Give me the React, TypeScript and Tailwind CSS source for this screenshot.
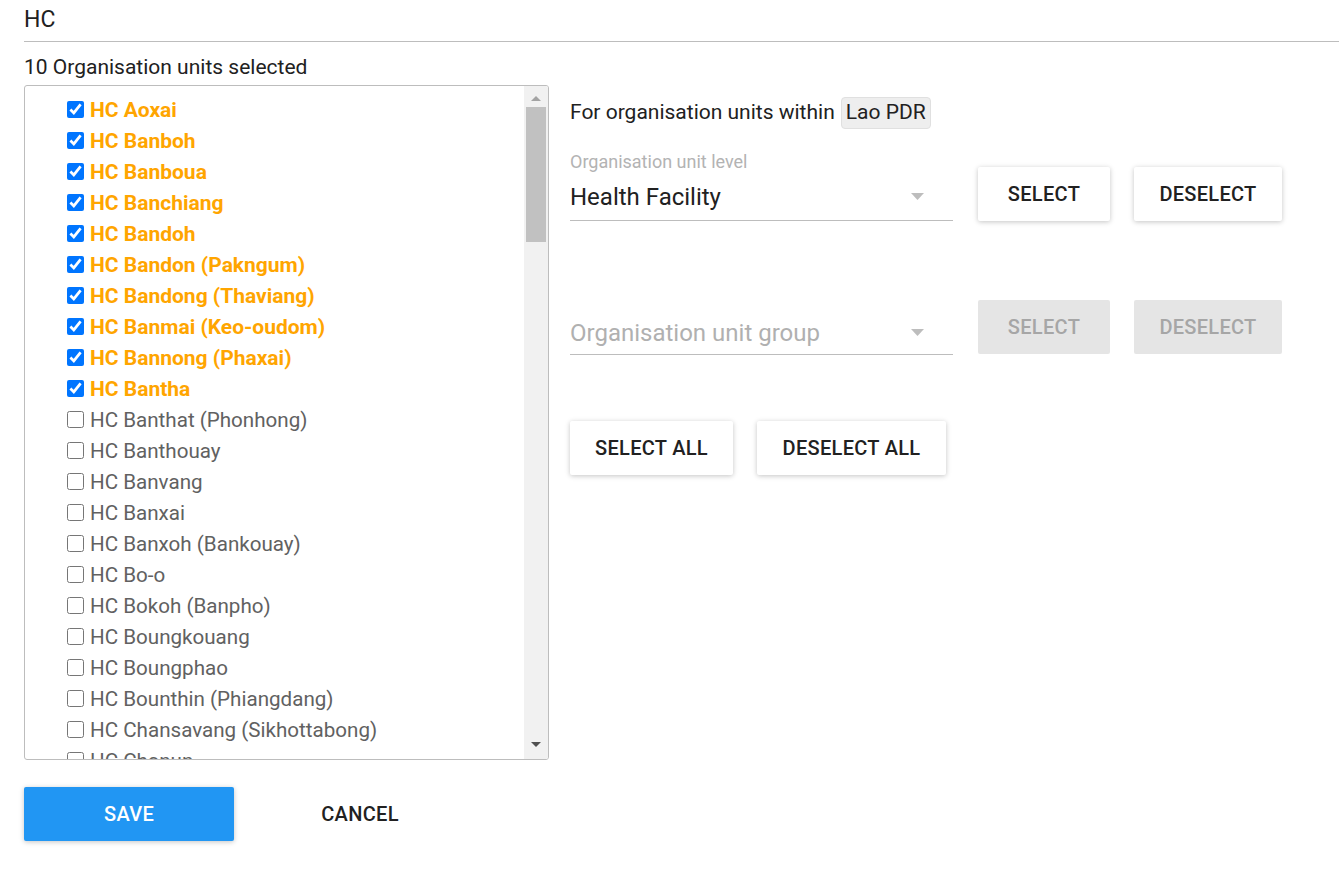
import React from 'react';

const units: { name: string; selected: boolean }[] = [
  { name: 'HC Aoxai', selected: true },
  { name: 'HC Banboh', selected: true },
  { name: 'HC Banboua', selected: true },
  { name: 'HC Banchiang', selected: true },
  { name: 'HC Bandoh', selected: true },
  { name: 'HC Bandon (Pakngum)', selected: true },
  { name: 'HC Bandong (Thaviang)', selected: true },
  { name: 'HC Banmai (Keo-oudom)', selected: true },
  { name: 'HC Bannong (Phaxai)', selected: true },
  { name: 'HC Bantha', selected: true },
  { name: 'HC Banthat (Phonhong)', selected: false },
  { name: 'HC Banthouay', selected: false },
  { name: 'HC Banvang', selected: false },
  { name: 'HC Banxai', selected: false },
  { name: 'HC Banxoh (Bankouay)', selected: false },
  { name: 'HC Bo-o', selected: false },
  { name: 'HC Bokoh (Banpho)', selected: false },
  { name: 'HC Boungkouang', selected: false },
  { name: 'HC Boungphao', selected: false },
  { name: 'HC Bounthin (Phiangdang)', selected: false },
  { name: 'HC Chansavang (Sikhottabong)', selected: false },
  { name: 'HC Chanun', selected: false },
];

const Caret: React.FC = () => (
  <svg width="13" height="7" viewBox="0 0 13 7" className="mb-[2px]">
    <path d="M0 0 L13 0 L6.5 7 Z" fill="#bdbdbd" />
  </svg>
);

const RaisedButton: React.FC<{ label: string; width: string; disabled?: boolean }> = ({ label, width, disabled }) => (
  <button
    className={
      disabled
        ? `${width} h-[54px] rounded-[2px] bg-[#e5e5e5] text-[20px] font-medium tracking-[0.3px] text-[#a6a6a6]`
        : `${width} h-[54px] rounded-[2px] bg-white text-[20px] font-medium tracking-[0.3px] text-[#212121] shadow-[0_1px_6px_rgba(0,0,0,0.12),0_1px_4px_rgba(0,0,0,0.12)]`
    }
  >
    {label}
  </button>
);

const OrgUnitSelect: React.FC = () => {
  return (
    <div className="min-h-screen bg-white pl-6 font-['Roboto',sans-serif]">
      <div className="flex h-[42px] items-center border-b border-[#bdbdbd] text-[23px] text-[#212121]">HC</div>
      <div className="mt-[12px] text-[21px] leading-[26px] text-[#212121]">10 Organisation units selected</div>

      <div className="mt-[5px] flex">
        {/* tree list */}
        <div className="flex h-[675px] w-[525px] overflow-hidden rounded-[3px] border border-[#bdbdbd]">
          <div className="flex-1 overflow-hidden pl-[42px] pt-[9px]">
            {units.map((u) => (
              <div key={u.name} className="flex h-[31px] items-center">
                <input type="checkbox" defaultChecked={u.selected} className="m-0 mb-[3px] h-[17px] w-[17px] shrink-0 accent-[#0075ff]" />
                <span
                  className={
                    u.selected
                      ? 'ml-[6px] whitespace-nowrap text-[21px] font-bold text-[#ffa500]'
                      : 'ml-[6px] whitespace-nowrap text-[20.6px] text-[#616161]'
                  }
                >
                  {u.name}
                </span>
              </div>
            ))}
          </div>
          <div className="flex w-[24px] flex-col items-center bg-[#f1f1f1]">
            <svg width="10" height="5" viewBox="0 0 10 5" className="mt-[10px]">
              <path d="M0 5 L10 5 L5 0 Z" fill="#a3a3a3" />
            </svg>
            <div className="mt-[6px] h-[135px] w-[20px] bg-[#c1c1c1]" />
            <div className="flex-1" />
            <svg width="10" height="5" viewBox="0 0 10 5" className="mb-[12px]">
              <path d="M0 0 L10 0 L5 5 Z" fill="#505050" />
            </svg>
          </div>
        </div>

        {/* options */}
        <div className="ml-[21px]">
          <div className="mt-[12px] flex items-center text-[21px] text-[#212121]">
            <span>For organisation units within</span>
            <span className="ml-[6px] flex h-[32px] items-center rounded-[4px] border border-[#e0e0e0] bg-[#eeeeee] px-[4px]">Lao PDR</span>
          </div>

          <div className="mt-[20px] flex items-end">
            <div className="flex h-[72px] w-[383px] flex-col border-b border-[#bdbdbd]">
              <div className="mt-[1px] h-[24px] text-[18px] leading-[24px] text-[#b3b3b3]">Organisation unit level</div>
              <div className="mt-[7px] flex h-[32px] items-center justify-between pr-[29px]">
                <span className="text-[24px] text-[#212121]">Health Facility</span>
                <Caret />
              </div>
            </div>
            <div className="ml-[25px] flex gap-[24px]">
              <RaisedButton label="SELECT" width="w-[132px]" />
              <RaisedButton label="DESELECT" width="w-[148px]" />
            </div>
          </div>

          <div className="mt-[62px] flex items-end">
            <div className="flex h-[72px] w-[383px] flex-col justify-end border-b border-[#bdbdbd] pb-[5px]">
              <div className="flex h-[32px] items-center justify-between pr-[29px]">
                <span className="text-[24px] text-[#b0b0b0]">Organisation unit group</span>
                <Caret />
              </div>
            </div>
            <div className="mb-[1px] ml-[25px] flex gap-[24px]">
              <RaisedButton label="SELECT" width="w-[132px]" disabled />
              <RaisedButton label="DESELECT" width="w-[148px]" disabled />
            </div>
          </div>

          <div className="mt-[66px] flex gap-[24px]">
            <RaisedButton label="SELECT ALL" width="w-[163px]" />
            <RaisedButton label="DESELECT ALL" width="w-[189px]" />
          </div>
        </div>
      </div>

      <div className="mt-[27px] flex gap-[24px]">
        <button className="h-[54px] w-[210px] rounded-[2px] bg-[#2196f3] text-[20px] font-medium tracking-[0.3px] text-white shadow-[0_1px_6px_rgba(0,0,0,0.12),0_1px_4px_rgba(0,0,0,0.12)]">
          SAVE
        </button>
        <button className="h-[54px] w-[204px] text-[20px] font-medium tracking-[0.3px] text-[#212121]">CANCEL</button>
      </div>
    </div>
  );
};

export default function App() {
  return <OrgUnitSelect />;
}
